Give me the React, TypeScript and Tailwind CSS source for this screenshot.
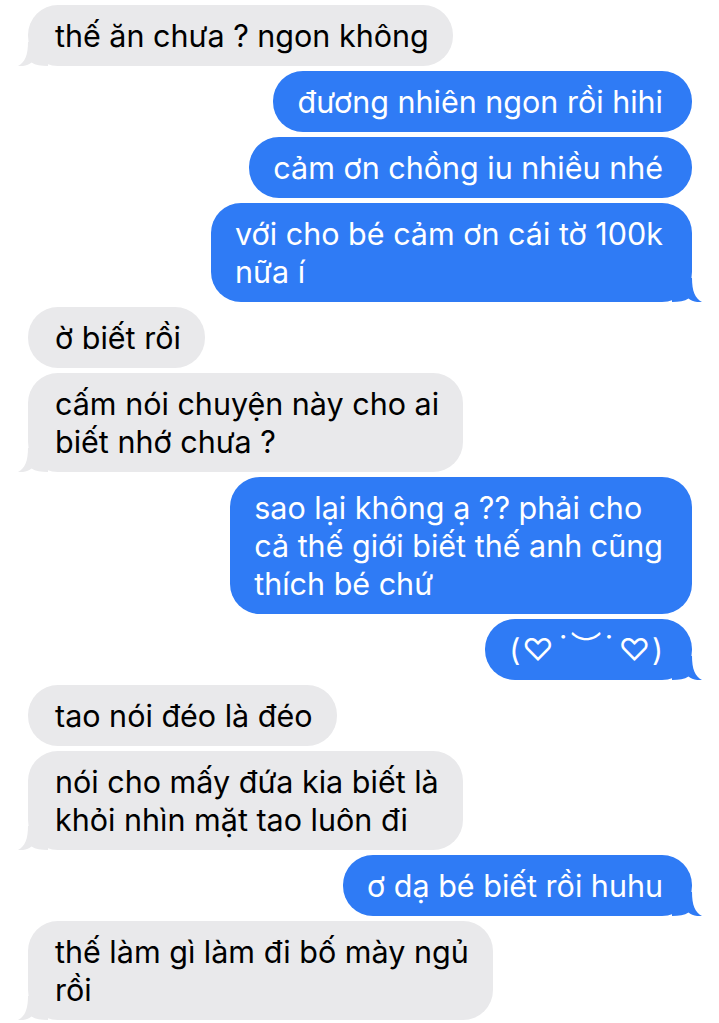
import React from "react";

type Msg = { me: boolean; lines: string[]; tail?: boolean; kao?: boolean };

const msgs: Msg[] = [
  { me: false, lines: ["thế ăn chưa ? ngon không"], tail: true },
  { me: true, lines: ["đương nhiên ngon rồi hihi"] },
  { me: true, lines: ["cảm ơn chồng iu nhiều nhé"] },
  { me: true, lines: ["với cho bé cảm ơn cái tờ 100k", "nữa í"], tail: true },
  { me: false, lines: ["ờ biết rồi"] },
  { me: false, lines: ["cấm nói chuyện này cho ai", "biết nhớ chưa ?"], tail: true },
  { me: true, lines: ["sao lại không ạ ?? phải cho", "cả thế giới biết thế anh cũng", "thích bé chứ"] },
  { me: true, lines: ["(♡˙︶˙♡)"], tail: true, kao: true },
  { me: false, lines: ["tao nói đéo là đéo"] },
  { me: false, lines: ["nói cho mấy đứa kia biết là", "khỏi nhìn mặt tao luôn đi"], tail: true },
  { me: true, lines: ["ơ dạ bé biết rồi huhu"], tail: true },
  { me: false, lines: ["thế làm gì làm đi bố mày ngủ", "rồi"], tail: true },
];

function TailRight() {
  return (
    <svg
      className="absolute bottom-0 right-[-10px]"
      width="30"
      height="24"
      viewBox="0 0 30 24"
    >
      <path
        d="M0 0 H20 C20 13 23 20.5 30 24 C24 24.6 19.5 23 16.5 20.5 C12.5 23.2 7 24 0 24 Z"
        fill="#2f7bf5"
      />
    </svg>
  );
}

function TailLeft() {
  return (
    <svg
      className="absolute bottom-0 left-[-10px]"
      width="30"
      height="24"
      viewBox="0 0 30 24"
    >
      <path
        d="M30 0 H10 C10 13 7 20.5 0 24 C6 24.6 10.5 23 13.5 20.5 C17.5 23.2 23 24 30 24 Z"
        fill="#e9e9eb"
      />
    </svg>
  );
}

function Kaomoji() {
  return (
    <div className="flex items-center h-[38px]">
      <span>(</span>
      <span className="ml-[2px]">♡</span>
      <span className="ml-[6px] mb-[6px]">˙</span>
      <span className="ml-[4px] -mt-[6px]">︶</span>
      <span className="ml-[4px] mb-[6px]">˙</span>
      <span className="ml-[6px]">♡</span>
      <span className="ml-[2px]">)</span>
    </div>
  );
}

function Bubble({ m }: { m: Msg }) {
  return (
    <div className={m.me ? "flex justify-end" : "flex justify-start"}>
      <div
        className={
          m.me
            ? "relative rounded-[30px] bg-[#2f7bf5] text-white pl-[24px] pr-[29px] py-[11.5px]"
            : "relative rounded-[30px] bg-[#e9e9eb] text-black pl-[27px] pr-[24px] py-[11.5px]"
        }
      >
        <div className="relative z-10 whitespace-nowrap text-[30.5px] leading-[38px]">
          {m.kao ? (
            <Kaomoji />
          ) : (
            m.lines.map((l, i) => <div key={i}>{l}</div>)
          )}
        </div>
        {m.tail && (m.me ? <TailRight /> : <TailLeft />)}
      </div>
    </div>
  );
}

export default function App() {
  return (
    <div
      className="w-[719px] h-[1023px] overflow-hidden bg-white pl-[28px] pr-[27px] pt-[5px] flex flex-col gap-[5px]"
      style={{ fontFamily: "Inter, 'Noto Sans', 'DejaVu Sans', 'Noto Sans CJK JP', sans-serif" }}
    >
      {msgs.map((m, i) => (
        <Bubble key={i} m={m} />
      ))}
    </div>
  );
}
